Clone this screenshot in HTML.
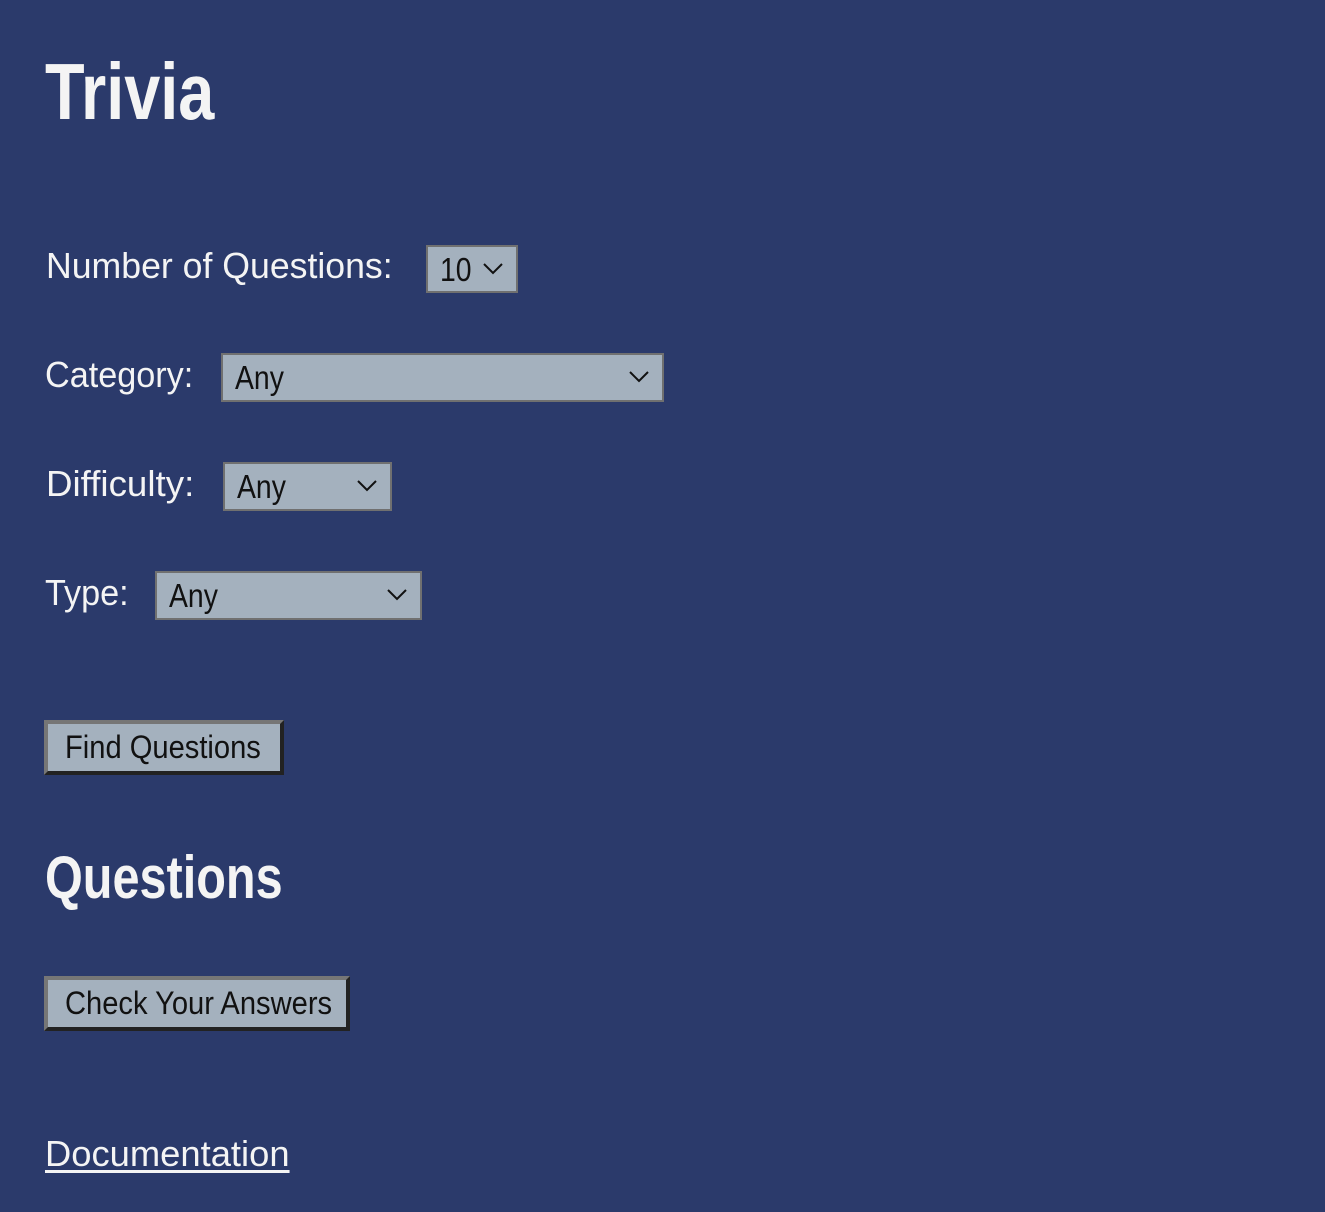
<!DOCTYPE html>
<html><head><meta charset="utf-8"><style>
html,body{margin:0;padding:0;background:#2b3a6b;width:1325px;height:1212px;overflow:hidden;font-family:"Liberation Sans",sans-serif;color:#f4f4f4}
.a{position:absolute;white-space:nowrap;transform-origin:0 0}
.h{font-weight:bold;color:#f4f4f4}
.lbl{font-size:36px;line-height:36px}
.sel{position:absolute;box-sizing:border-box;background:#a4b1be;border:2px solid #707070;color:#111;font-size:33px}
.sel span{position:absolute;left:12px;top:5px;line-height:36px;white-space:nowrap;transform-origin:0 0;transform:scaleX(0.86)}
.sel svg{position:absolute;right:12px;top:15px}
.btn{position:absolute;box-sizing:border-box;background:#a4b1be;border:4px solid;border-color:#767676 #222 #222 #767676;color:#111;font-size:32px}
.btn span{position:absolute;left:17px;top:5px;line-height:36px;white-space:nowrap;transform-origin:0 0;transform:scaleX(0.91)}
</style></head><body>
<div class="a h" style="left:45px;top:47px;font-size:80px;line-height:90px;transform:scaleX(0.81)">Trivia</div>

<div class="a lbl" style="left:46px;top:248px;transform:scaleX(0.99)">Number of Questions:</div>
<div class="sel" style="left:426px;top:245px;width:92px;height:48px"><span>10</span><svg width="22" height="14" viewBox="0 0 22 14"><path d="M2 2 L11 11 L20 2" fill="none" stroke="#111" stroke-width="2"/></svg></div>

<div class="a lbl" style="left:45px;top:357px;transform:scaleX(0.95)">Category:</div>
<div class="sel" style="left:221px;top:353px;width:443px;height:49px"><span>Any</span><svg width="22" height="14" viewBox="0 0 22 14"><path d="M2 2 L11 11 L20 2" fill="none" stroke="#111" stroke-width="2"/></svg></div>

<div class="a lbl" style="left:46px;top:466px;transform:scaleX(1.02)">Difficulty:</div>
<div class="sel" style="left:223px;top:462px;width:169px;height:49px"><span>Any</span><svg width="22" height="14" viewBox="0 0 22 14"><path d="M2 2 L11 11 L20 2" fill="none" stroke="#111" stroke-width="2"/></svg></div>

<div class="a lbl" style="left:45px;top:575px;transform:scaleX(0.95)">Type:</div>
<div class="sel" style="left:155px;top:571px;width:267px;height:49px"><span>Any</span><svg width="22" height="14" viewBox="0 0 22 14"><path d="M2 2 L11 11 L20 2" fill="none" stroke="#111" stroke-width="2"/></svg></div>

<div class="btn" style="left:44px;top:720px;width:240px;height:55px"><span>Find Questions</span></div>

<div class="a h" style="left:45px;top:843px;font-size:60px;line-height:70px;transform:scaleX(0.81)">Questions</div>

<div class="btn" style="left:44px;top:976px;width:306px;height:55px"><span>Check Your Answers</span></div>

<div class="a" style="left:45px;top:1134px;font-size:36px;line-height:40px;text-decoration:underline;text-underline-offset:4px;transform:scaleX(1.01)">Documentation</div>
</body></html>
